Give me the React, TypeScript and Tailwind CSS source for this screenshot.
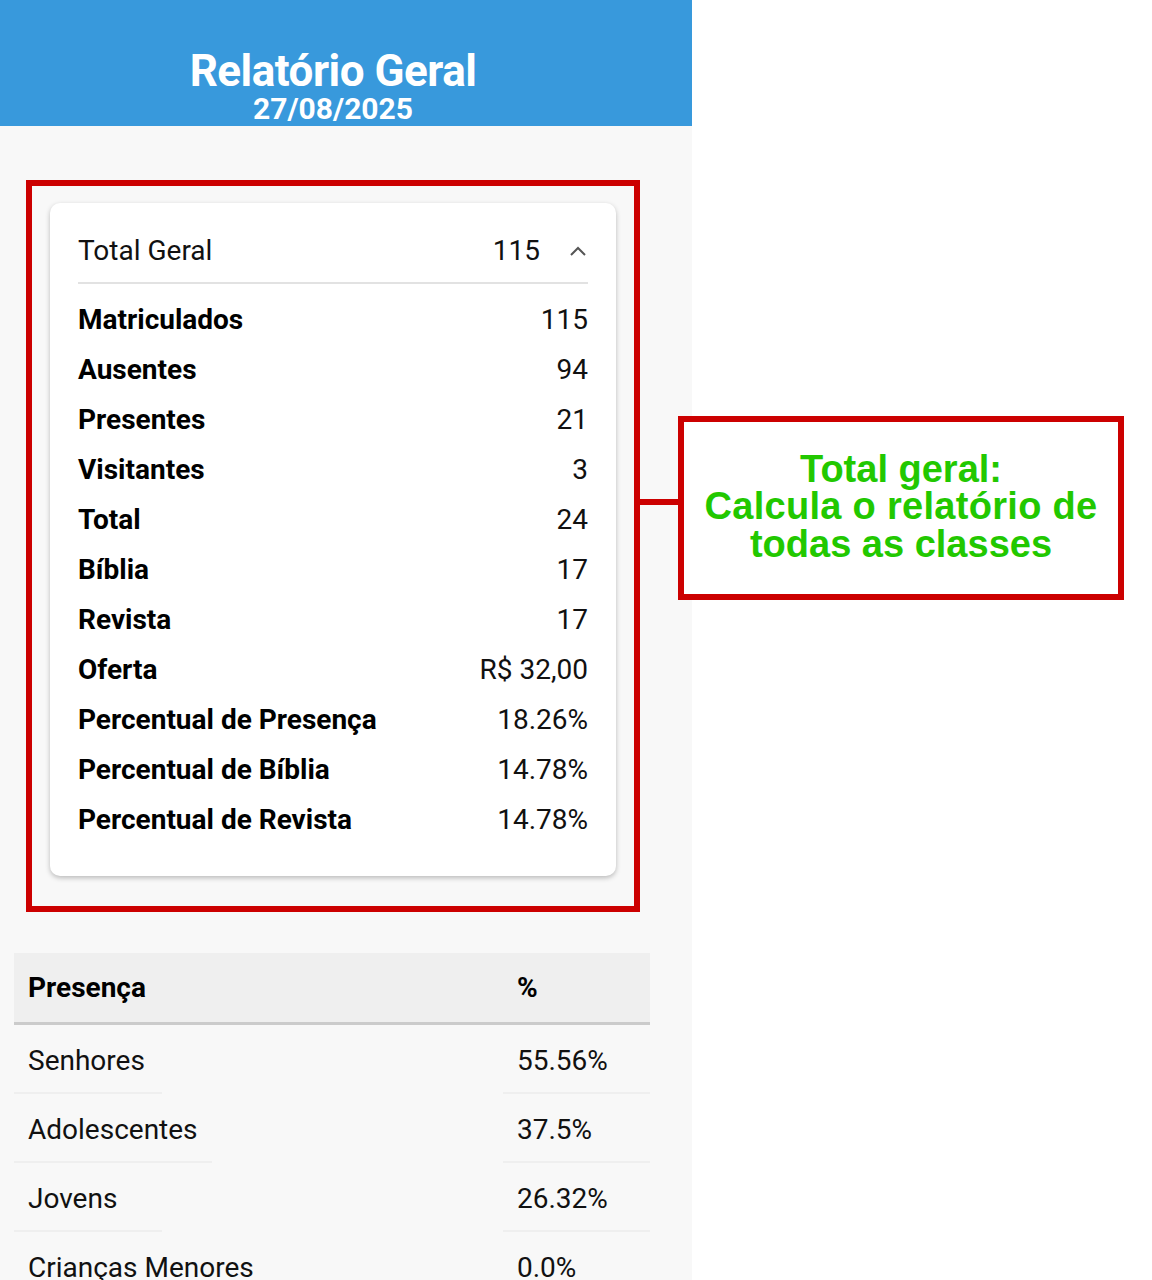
import React from "react"

const totals = [
  { label: "Matriculados", value: "115" },
  { label: "Ausentes", value: "94" },
  { label: "Presentes", value: "21" },
  { label: "Visitantes", value: "3" },
  { label: "Total", value: "24" },
  { label: "Bíblia", value: "17" },
  { label: "Revista", value: "17" },
  { label: "Oferta", value: "R$ 32,00" },
  { label: "Percentual de Presença", value: "18.26%" },
  { label: "Percentual de Bíblia", value: "14.78%" },
  { label: "Percentual de Revista", value: "14.78%" },
]

const presenca = [
  { classe: "Senhores", pct: "55.56%", line: "w-[148px]" },
  { classe: "Adolescentes", pct: "37.5%", line: "w-[198px]" },
  { classe: "Jovens", pct: "26.32%", line: "w-[148px]" },
  { classe: "Crianças Menores", pct: "0.0%", line: "w-[198px]" },
]

const ChevronUp = () => (
  <svg width="20" height="12" viewBox="0 0 20 12" fill="none">
    <polyline points="3,10 10,3 17,10" stroke="#555" strokeWidth="2" />
  </svg>
)

export default function App() {
  return (
    <div className="relative w-[1152px] h-[1280px] overflow-hidden bg-white font-['Roboto',sans-serif]">
      <div className="w-[692px] h-full bg-[#f8f8f8]">
        {/* Header */}
        <header className="h-[126px] bg-[#3899dc] flex flex-col items-center justify-end pr-[26px] text-white font-bold">
          <h1 className="text-[44px] leading-[42px] tracking-[-0.5px]">Relatório Geral</h1>
          <p className="text-[30px] leading-[34px]">27/08/2025</p>
        </header>

        {/* Total geral (highlighted) */}
        <div className="ml-[26px] mt-[54px] w-[614px] h-[732px] border-[6px] border-[#cc0000] pl-[18px] pt-[17px]">
          <div className="w-[566px] bg-white rounded-[10px] shadow-[0_2px_5px_rgba(0,0,0,0.25)] px-[28px] pb-[31px]">
            <div className="h-[81px] pt-[17px] flex items-center border-b-2 border-[#e2e2e2] text-[28px] text-[#111]">
              <span className="flex-1">Total Geral</span>
              <span className="mr-[28px]">115</span>
              <ChevronUp />
            </div>
            <div className="pt-[11px]">
              {totals.map((t) => (
                <div key={t.label} className="h-[50px] flex items-center justify-between text-[28px]">
                  <span className="font-bold text-black">{t.label}</span>
                  <span className="text-[#111]">{t.value}</span>
                </div>
              ))}
            </div>
          </div>
        </div>

        {/* Presença table */}
        <div className="ml-[14px] mt-[41px] w-[636px]">
          <div className="h-[72px] bg-[#efefef] border-b-[3px] border-[#cbcbcb] flex items-center text-[28px] font-bold text-black">
            <span className="w-[489px] pl-[14px]">Presença</span>
            <span className="pl-[14px]">%</span>
          </div>
          {presenca.map((p) => (
            <div key={p.classe}>
              <div className="h-[67px] pt-[5px] flex items-center text-[28px] text-[#111]">
                <span className="w-[489px] pl-[14px]">{p.classe}</span>
                <span className="pl-[14px]">{p.pct}</span>
              </div>
              <div className="flex">
                <div className={`${p.line} h-[2px] bg-[#efefef]`} />
                <div className="ml-auto w-[147px] h-[2px] bg-[#efefef]" />
              </div>
            </div>
          ))}
        </div>
      </div>

      {/* Annotation */}
      <div className="absolute left-[640px] top-[499px] w-[40px] h-[6px] bg-[#cc0000]" />
      <div className="absolute left-[678px] top-[416px] w-[446px] h-[184px] border-[6px] border-[#cc0000] bg-white flex flex-col items-center justify-center pb-[2px] font-['Liberation_Sans',Arial,sans-serif] font-bold text-[38px] leading-[37.5px] text-[#22c800] text-center">
        <span>Total geral:</span>
        <span className="tracking-[0.3px]">Calcula o relatório de</span>
        <span>todas as classes</span>
      </div>
    </div>
  )
}
